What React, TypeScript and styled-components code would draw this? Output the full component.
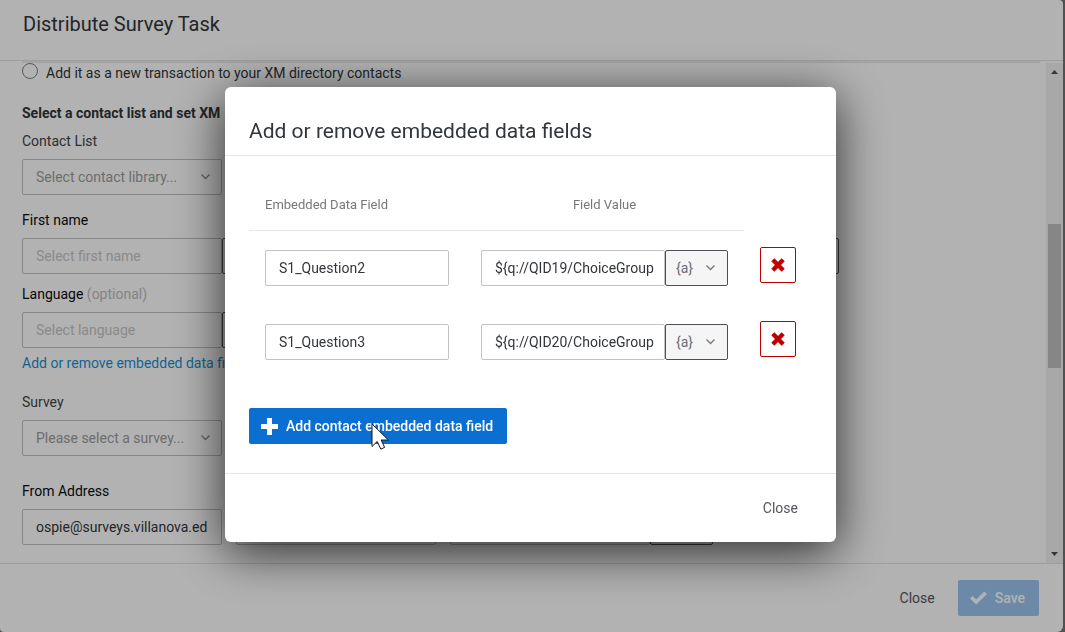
import React from "react";
import styled, { createGlobalStyle, css } from "styled-components";

const GlobalStyle = createGlobalStyle`
  *, *::before, *::after { box-sizing: border-box; }
  body {
    margin: 0;
    background: #747474;
    color: #32363a;
    font: 14px/20px Roboto, "Liberation Sans", sans-serif;
  }
  input, select, button { font: inherit; color: inherit; margin: 0; }
  h1, h2, h3 { margin: 0; font-weight: 400; }
`;

const TaskPanel = styled.div`
  display: flex;
  flex-direction: column;
  min-height: 100vh;
  margin-right: 2px;
  background: #fff;
  border-radius: 0 4px 6px 4px;
`;

const TaskHeader = styled.header`
  padding: 10px 23px 22px;
  border-bottom: 1px solid #e2e2e2;
`;

const Title = styled.h1`
  font-size: 20px;
  line-height: 28px;
`;

const DialogTitle = styled.h2`
  font-size: 21px;
  line-height: 28px;
`;

const TaskBody = styled.div`
  display: flex;
  flex: 1;
`;

const Form = styled.form`
  flex: 1;
  min-width: 0;
  margin: 0 6px 0 22px;
  padding-bottom: 18px;
  border-top: 2px solid #ebebeb;
`;

const RadioRow = styled.label`
  display: flex;
  align-items: flex-start;
  gap: 8px;
`;

const Radio = styled.input`
  appearance: none;
  width: 16px;
  height: 16px;
  border: 1px solid #7c828c;
  border-radius: 50%;
  background: #fff;
`;

const SectionTitle = styled.h2`
  margin: 20px 0 8px;
  font-size: 14px;
  line-height: 20px;
  font-weight: 700;
`;

const Row = styled.div<{ $after: number }>`
  display: flex;
  align-items: flex-end;
  gap: 14px;
  margin-bottom: ${(p) => p.$after}px;
`;

const Field = styled.div`
  display: flex;
  flex-direction: column;
  gap: 8px;
`;

const Label = styled.label<{ $strong?: boolean }>`
  color: ${(p) => (p.$strong ? "#0c0c0c" : "#40444a")};
`;

const Optional = styled.span`
  color: #bdbdbd;
`;

const InputGroup = styled.div`
  display: flex;
`;

const box = css`
  height: 36px;
  padding: 0 13px;
  border: 1px solid #c2c2c2;
  border-radius: 2px;
  background: #fff;
  outline: none;
`;

const TextInput = styled.input<{ $width: number }>`
  ${box}
  width: ${(p) => p.$width}px;
  &::placeholder { color: #c6c6c6; opacity: 1; }
`;

const ValueInput = styled(TextInput)`
  padding-right: 8px;
`;

const SelectWrap = styled.div`
  display: grid;
  align-items: center;
  width: 200px;
  > * { grid-area: 1 / 1; }
  > svg { justify-self: end; margin-right: 11px; pointer-events: none; }
`;

const Select = styled.select`
  ${box}
  appearance: none;
  width: 100%;
  color: #9d9d9d;
`;

const PipeButton = styled.button`
  display: flex;
  align-items: center;
  justify-content: space-between;
  width: 63px;
  height: 36px;
  padding: 0 11px 0 10px;
  border: 1px solid #4c4f59;
  border-radius: 2px;
  background: #f5f5f5;
  color: #6b6e75;
`;

const FieldLink = styled.a`
  display: block;
  width: max-content;
  margin-bottom: 19px;
  color: #1b8fd2;
  text-decoration: none;
`;

const Scrollbar = styled.div`
  display: grid;
  grid-template-rows: 17px 18fr 18fr 22fr 19px;
  justify-items: center;
  align-items: center;
  width: 17px;
  margin-top: 2px;
  background: #f1f1f1;
`;

const Thumb = styled.div`
  grid-row: 3;
  align-self: stretch;
  width: 13px;
  background: #c1c1c1;
`;

const Arrow = styled.svg<{ $row: number }>`
  grid-row: ${(p) => p.$row};
  display: block;
`;

const TaskFooter = styled.footer`
  display: flex;
  justify-content: flex-end;
  gap: 9px;
  padding: 16px 24px;
  border-top: 1px solid #e2e2e2;
`;

const TextButton = styled.button`
  height: 36px;
  padding: 0 14px;
  border: 0;
  background: none;
  color: #54575d;
`;

const PrimaryButton = styled.button<{ $dim?: boolean }>`
  position: relative;
  display: flex;
  align-items: center;
  gap: 8px;
  height: 36px;
  padding: 0 14px 0 12px;
  border: 0;
  border-radius: 2px;
  background: ${(p) => (p.$dim ? "#9cc5f1" : "#0b6ed1")};
  color: #fff;
  font-weight: 500;
`;

const Backdrop = styled.div`
  position: fixed;
  inset: 0;
  display: flex;
  align-items: flex-start;
  justify-content: center;
  padding: 87px 4px 0 0;
  overflow: hidden;
  background: rgba(0, 0, 0, 0.3);
`;

const Dialog = styled.section`
  width: 100%;
  max-width: 611px;
  border-radius: 6px;
  background: #fff;
  box-shadow: 0 10px 50px rgba(0, 0, 0, 0.76);
`;

const DialogHeader = styled.header`
  padding: 30px 24px 10px;
  border-bottom: 1px solid #e6e6e6;
`;

const DialogBody = styled.div`
  padding: 24px 24px 29px;
`;

const DialogFooter = styled.footer`
  display: flex;
  justify-content: flex-end;
  padding: 16px 24px;
  border-top: 1px solid #e6e6e6;
`;

const FieldTable = styled.table`
  margin-bottom: 29px;
  border-collapse: separate;
  border-spacing: 0;
`;

const HeadCell = styled.th<{ $align: "left" | "center" }>`
  padding: 15px 16px;
  border-bottom: 1px solid #e6e6e6;
  color: #75777b;
  font-size: 13px;
  font-weight: 400;
  text-align: ${(p) => p.$align};
`;

const Cell = styled.td<{ $y: number }>`
  padding: ${(p) => p.$y}px 16px;
  vertical-align: top;
`;

const RemoveButton = styled.button`
  display: flex;
  align-items: center;
  justify-content: center;
  width: 36px;
  height: 36px;
  padding: 0;
  border: 1px solid #b80000;
  border-radius: 2px;
  background: #fff;
  color: #c00000;
`;

const Pointer = styled.svg`
  position: absolute;
  top: 15px;
  left: 122px;
  pointer-events: none;
`;

const Chevron = ({ color = "#74777c" }: { color?: string }) => (
  <svg width="11" height="8" viewBox="0 0 11 8" fill="none" aria-hidden="true">
    <path d="M1.5 1.5l4 4 4-4" stroke={color} strokeWidth="1.3" />
  </svg>
);

const PlusIcon = () => (
  <svg width="17" height="17" viewBox="0 0 17 17" fill="currentColor" aria-hidden="true">
    <path d="M6 0h5v6h6v5h-6v6H6v-6H0V6h6z" />
  </svg>
);

const CheckIcon = () => (
  <svg width="17" height="14" viewBox="0 0 17 14" fill="currentColor" aria-hidden="true">
    <path d="M0 7.6l2.6-2.6 3.6 3.5L14.2.4 17 3 6.2 13.6z" />
  </svg>
);

const CrossIcon = () => (
  <svg width="14" height="14" viewBox="0 0 14 14" aria-hidden="true">
    <path d="M1.8 1.8l10.4 10.4M12.2 1.8L1.8 12.2" stroke="currentColor" strokeWidth="4.4" />
  </svg>
);

const Pipe = () => (
  <PipeButton type="button" aria-label="Insert piped text">
    <span>{"{a}"}</span>
    <Chevron />
  </PipeButton>
);

const PipedInput = ({ id, placeholder, label }: { id?: string; placeholder?: string; label?: string }) => (
  <InputGroup>
    <TextInput id={id} $width={200} placeholder={placeholder} aria-label={label} />
    <Pipe />
  </InputGroup>
);

const Dropdown = ({ id, text }: { id: string; text: string }) => (
  <SelectWrap>
    <Select id={id}>
      <option>{text}</option>
    </Select>
    <Chevron color="#8d8d8d" />
  </SelectWrap>
);

const fields = [
  { name: "S1_Question2", value: "${q://QID19/ChoiceGroup" },
  { name: "S1_Question3", value: "${q://QID20/ChoiceGroup" },
];

export default function App() {
  return (
    <>
      <GlobalStyle />
      <TaskPanel>
        <TaskHeader>
          <Title>Distribute Survey Task</Title>
        </TaskHeader>
        <TaskBody>
          <Form>
            <RadioRow>
              <Radio type="radio" name="mode" />
              Add it as a new transaction to your XM directory contacts
            </RadioRow>
            <SectionTitle>Select a contact list and set XM</SectionTitle>
            <Row $after={15}>
              <Field>
                <Label htmlFor="list">Contact List</Label>
                <Dropdown id="list" text="Select contact library..." />
              </Field>
            </Row>
            <Row $after={10}>
              <Field>
                <Label $strong htmlFor="first">First name</Label>
                <PipedInput id="first" placeholder="Select first name" />
              </Field>
              <PipedInput label="Last name" />
              <PipedInput label="Email" />
            </Row>
            <Row $after={5}>
              <Field>
                <Label $strong htmlFor="language">
                  Language <Optional>(optional)</Optional>
                </Label>
                <PipedInput id="language" placeholder="Select language" />
              </Field>
            </Row>
            <FieldLink href="#fields">Add or remove embedded data fields</FieldLink>
            <Row $after={25}>
              <Field>
                <Label htmlFor="survey">Survey</Label>
                <Dropdown id="survey" text="Please select a survey..." />
              </Field>
            </Row>
            <Row $after={0}>
              <Field>
                <Label $strong htmlFor="from">From Address</Label>
                <TextInput id="from" $width={200} defaultValue="ospie@surveys.villanova.edu" />
              </Field>
              <TextInput $width={200} aria-label="From name" />
              <PipedInput label="Reply-to address" />
            </Row>
          </Form>
          <Scrollbar aria-hidden="true">
            <Arrow $row={1} width="7" height="4" viewBox="0 0 7 4">
              <path d="M0 4h7L3.5 0z" fill="#505050" />
            </Arrow>
            <Thumb />
            <Arrow $row={5} width="7" height="4" viewBox="0 0 7 4">
              <path d="M0 0h7L3.5 4z" fill="#505050" />
            </Arrow>
          </Scrollbar>
        </TaskBody>
        <TaskFooter>
          <TextButton type="button">Close</TextButton>
          <PrimaryButton type="button" $dim>
            <CheckIcon />
            Save
          </PrimaryButton>
        </TaskFooter>
      </TaskPanel>

      <Backdrop>
        <Dialog role="dialog" aria-modal="true" aria-labelledby="dialog-title">
          <DialogHeader>
            <DialogTitle id="dialog-title">Add or remove embedded data fields</DialogTitle>
          </DialogHeader>
          <DialogBody>
            <FieldTable>
              <thead>
                <tr>
                  <HeadCell $align="left">Embedded Data Field</HeadCell>
                  <HeadCell $align="center">Field Value</HeadCell>
                </tr>
              </thead>
              <tbody>
                {fields.map((f) => (
                  <tr key={f.name}>
                    <Cell $y={19}>
                      <TextInput $width={184} defaultValue={f.name} aria-label="Embedded data field" />
                    </Cell>
                    <Cell $y={19}>
                      <InputGroup>
                        <ValueInput $width={184} defaultValue={f.value} aria-label="Field value" />
                        <Pipe />
                      </InputGroup>
                    </Cell>
                    <Cell $y={16}>
                      <RemoveButton type="button" aria-label={`Remove ${f.name}`}>
                        <CrossIcon />
                      </RemoveButton>
                    </Cell>
                  </tr>
                ))}
              </tbody>
            </FieldTable>
            <PrimaryButton type="button">
              <PlusIcon />
              Add contact embedded data field
              <Pointer width="19" height="28" viewBox="0 0 19 28" aria-hidden="true">
                <path
                  d="M1 1v22.5l5.2-5 3.6 7.6 3.8-1.7-3.4-7.4h7.2z"
                  fill="#fff"
                  stroke="#101820"
                  strokeWidth="1"
                />
              </Pointer>
            </PrimaryButton>
          </DialogBody>
          <DialogFooter>
            <TextButton type="button">Close</TextButton>
          </DialogFooter>
        </Dialog>
      </Backdrop>
    </>
  );
}
